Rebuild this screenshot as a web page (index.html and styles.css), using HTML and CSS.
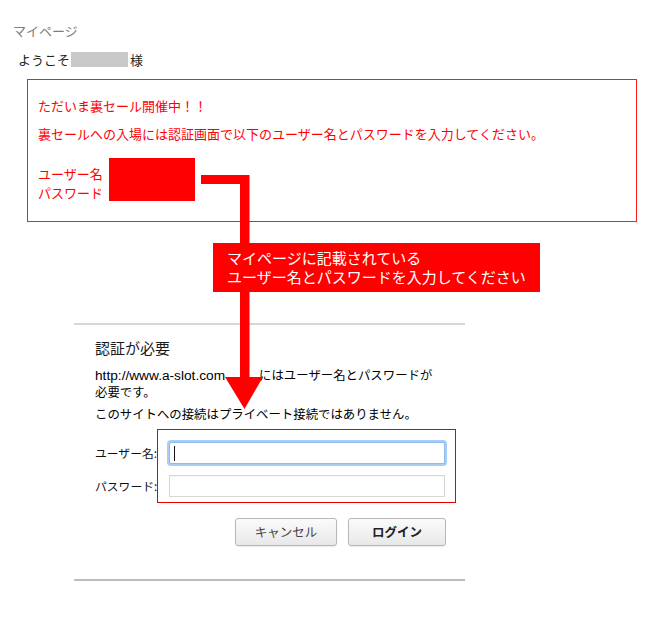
FILE: index.html
```html
<!DOCTYPE html>
<html lang="ja">
<head>
<meta charset="utf-8">
<title>マイページ</title>
<link rel="stylesheet" href="styles.css">
</head>
<body>
<div class="page">
  <div class="crumb">マイページ</div>
  <div class="welcome">ようこそ<span class="masked"></span>様</div>

  <div class="notice">
    <p class="notice-title">ただいま裏セール開催中！！</p>
    <p class="notice-body">裏セールへの入場には認証画面で以下のユーザー名とパスワードを入力してください。</p>
    <div class="cred">
      <div class="cred-labels">
        <div>ユーザー名</div>
        <div>パスワード</div>
      </div>
      <div class="cred-mask"></div>
    </div>
  </div>

  <div class="callout">
    <div class="callout-line">マイページに記載されている</div>
    <div class="callout-line">ユーザー名とパスワードを入力してください</div>
  </div>

  <div class="dialog">
    <h1 class="dialog-title">認証が必要</h1>
    <p class="dialog-text"><span class="url">http://www.a-slot.com</span><span class="gap"></span>にはユーザー名とパスワードが<br>必要です。</p>
    <p class="dialog-text warn">このサイトへの接続はプライベート接続ではありません。</p>
    <div class="form">
      <div class="form-labels">
        <div class="form-label">ユーザー名:</div>
        <div class="form-label">パスワード:</div>
      </div>
      <div class="form-fields">
        <div class="field focused"><span class="caret"></span></div>
        <div class="field"></div>
      </div>
    </div>
    <div class="buttons">
      <div class="btn btn-cancel">キャンセル</div>
      <div class="btn btn-login">ログイン</div>
    </div>
  </div>

  <svg class="arrow" width="655" height="622" viewBox="0 0 655 622" xmlns="http://www.w3.org/2000/svg">
    <rect x="201" y="175" width="48" height="9" fill="#ff0000"/>
    <rect x="240" y="175" width="9.5" height="203" fill="#ff0000"/>
    <polygon points="225,377 263,377 244.5,409" fill="#ff0000"/>
  </svg>
</div>
</body>
</html>
```

FILE: styles.css
```css
html, body {
  margin: 0;
  padding: 0;
  background: #ffffff;
}

body {
  font-family: "Noto Sans CJK JP", "Noto Sans", sans-serif;
  color: #222222;
}

.page {
  position: relative;
  width: 655px;
  height: 622px;
  overflow: hidden;
}

.crumb {
  margin: 0;
  padding: 21px 0 0 13px;
  font-size: 13px;
  line-height: 19px;
  color: #7d7d7d;
}

.welcome {
  margin-top: 10px;
  padding-left: 18px;
  font-size: 13px;
  line-height: 19px;
  color: #222222;
  display: flex;
  align-items: center;
}

.masked {
  display: inline-block;
  width: 57px;
  height: 15px;
  background: #c9c9c9;
  margin: 0 2px 0 1px;
}

.notice {
  margin: 10px 0 0 27px;
  width: 610px;
  box-sizing: border-box;
  border: 1px solid #ff1a1a;
  padding: 16px 10px 19px 10px;
  color: #ff0000;
  font-size: 13px;
  line-height: 19px;
}

.notice p {
  margin: 0;
}

.notice-body {
  margin-top: 9px !important;
}

.cred {
  margin-top: 15px;
  display: flex;
  align-items: flex-start;
}

.cred-labels {
  padding-top: 6px;
  width: 71px;
}

.cred-mask {
  width: 86px;
  height: 43px;
  background: #ff0000;
}

.callout {
  position: relative;
  z-index: 2;
  margin: 21px 0 0 213px;
  width: 327px;
  height: 49px;
  box-sizing: border-box;
  background: #ff0000;
  color: #ffffff;
  font-size: 15px;
  padding: 6px 0 0 14px;
  white-space: nowrap;
  display: flex;
  flex-direction: column;
}

.callout-line {
  height: 18px;
  line-height: 18px;
  margin-bottom: 1px;
}

.dialog {
  margin: 31px 0 0 74px;
  width: 391px;
  box-sizing: border-box;
  border-top: 2px solid #d6d6d6;
  border-bottom: 2px solid #bdbdbd;
  padding: 13px 19px 33px 21px;
}

.dialog-title {
  margin: 0;
  font-size: 15px;
  line-height: 20px;
  font-weight: normal;
  color: #1a1a1a;
}

.dialog-text {
  margin: 9px 0 0 0;
  font-size: 12.4px;
  line-height: 16px;
  color: #000000;
  white-space: nowrap;
}

.dialog-text.warn {
  margin-top: 6px;
}

.url {
  font-family: "Liberation Sans", Arial, sans-serif;
  font-size: 13.7px;
}

.gap {
  display: inline-block;
  width: 34px;
}

.form {
  margin-top: 7px;
  display: flex;
}

.form-labels {
  width: 63px;
  padding-top: 13px;
  display: flex;
  flex-direction: column;
  gap: 11px;
}

.form-label {
  height: 22px;
  line-height: 22px;
  font-size: 11.8px;
  color: #111111;
  white-space: nowrap;
}

.form-fields {
  width: 299px;
  box-sizing: border-box;
  border: 1px solid #e60000;
  padding: 12px 10px 5px 11px;
  display: flex;
  flex-direction: column;
  gap: 11px;
}

.field {
  width: 276px;
  height: 22px;
  box-sizing: border-box;
  background: #ffffff;
  border: 1px solid #d6d6d6;
  box-shadow: inset 0 1px 1px rgba(0, 0, 0, 0.04);
  display: flex;
  align-items: center;
}

.field.focused {
  border: 1px solid #8dbbee;
  border-radius: 2px;
  box-shadow: 0 0 0 2px #a9cdf4;
}

.caret {
  display: block;
  width: 1px;
  height: 15px;
  margin-left: 4px;
  background: #111111;
}

.buttons {
  margin-top: 15px;
  display: flex;
  justify-content: flex-end;
  gap: 11px;
}

.btn {
  height: 28px;
  box-sizing: border-box;
  border: 1px solid #b7b7b7;
  border-radius: 3px;
  background: linear-gradient(#fbfbfb, #e8e8e8);
  box-shadow: 0 1px 1px rgba(0, 0, 0, 0.08);
  font-size: 12.5px;
  line-height: 26px;
  text-align: center;
}

.btn-cancel {
  width: 102px;
  color: #444444;
}

.btn-login {
  width: 98px;
  color: #222222;
  font-weight: bold;
}

.arrow {
  position: absolute;
  top: 0;
  left: 0;
  z-index: 1;
  pointer-events: none;
}
```
